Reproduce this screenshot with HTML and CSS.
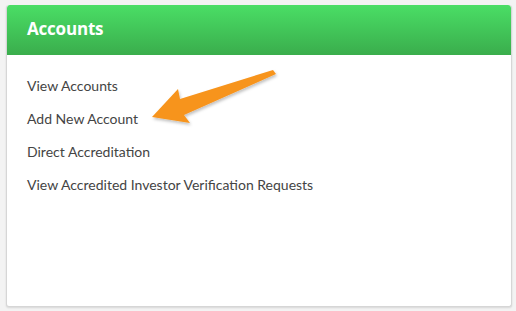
FILE: index.html
```html
<!DOCTYPE html>
<html>
<head>
<meta charset="utf-8">
<link rel="stylesheet" href="styles.css">
</head>
<body>
<div class="card">
  <div class="card-header"><h2 class="title">Accounts</h2></div>
  <ul class="links">
    <li><a href="#">View Accounts</a></li>
    <li><a href="#">Add New Account</a></li>
    <li><a href="#">Direct Accreditation</a></li>
    <li><a href="#">View Accredited Investor Verification Requests</a></li>
  </ul>
</div>
<svg class="arrow" width="516" height="311" viewBox="0 0 516 311">
  <defs>
    <filter id="sh" x="-20%" y="-20%" width="140%" height="140%">
      <feDropShadow dx="1" dy="2" stdDeviation="1.5" flood-color="#000" flood-opacity="0.25"/>
    </filter>
  </defs>
  <polygon filter="url(#sh)" fill="#f7941d" points="152,117 178,89 180,99 273,70 276,74 184,115 190,123"/>
</svg>
</body>
</html>
```
FILE: styles.css
```css
html, body {
  margin: 0;
  padding: 0;
  background: #f3f3f3;
  font-family: "Lato", "Open Sans", sans-serif;
}
body {
  padding: 5px 4px 4px 6px;
  width: 516px;
  height: 311px;
  box-sizing: border-box;
}
.card {
  width: 506px;
  height: 302px;
  box-sizing: border-box;
  background: #fff;
  border: 1px solid #d6d6d6;
  border-top: none;
  border-radius: 3px;
  box-shadow: 0 1px 2px rgba(0,0,0,0.12);
  overflow: hidden;
}
.card-header {
  height: 50px;
  background: linear-gradient(#4ade65, #3aad4c);
  display: flex;
  align-items: center;
  padding-left: 20px;
  border-radius: 3px 3px 0 0;
}
.title {
  margin: 0;
  color: #fff;
  font-family: "Open Sans", sans-serif;
  font-weight: 700;
  font-size: 17px;
  letter-spacing: -0.2px;
  padding-bottom: 3px;
}
.links {
  list-style: none;
  margin: 0;
  padding: 21px 0 0 20px;
  display: flex;
  flex-direction: column;
  gap: 14px;
}
.links li {
  line-height: 18px;
}
.links a {
  color: #444;
  text-decoration: none;
  font-size: 14px;
}
.arrow {
  position: absolute;
  left: 0;
  top: 0;
  pointer-events: none;
}
```
